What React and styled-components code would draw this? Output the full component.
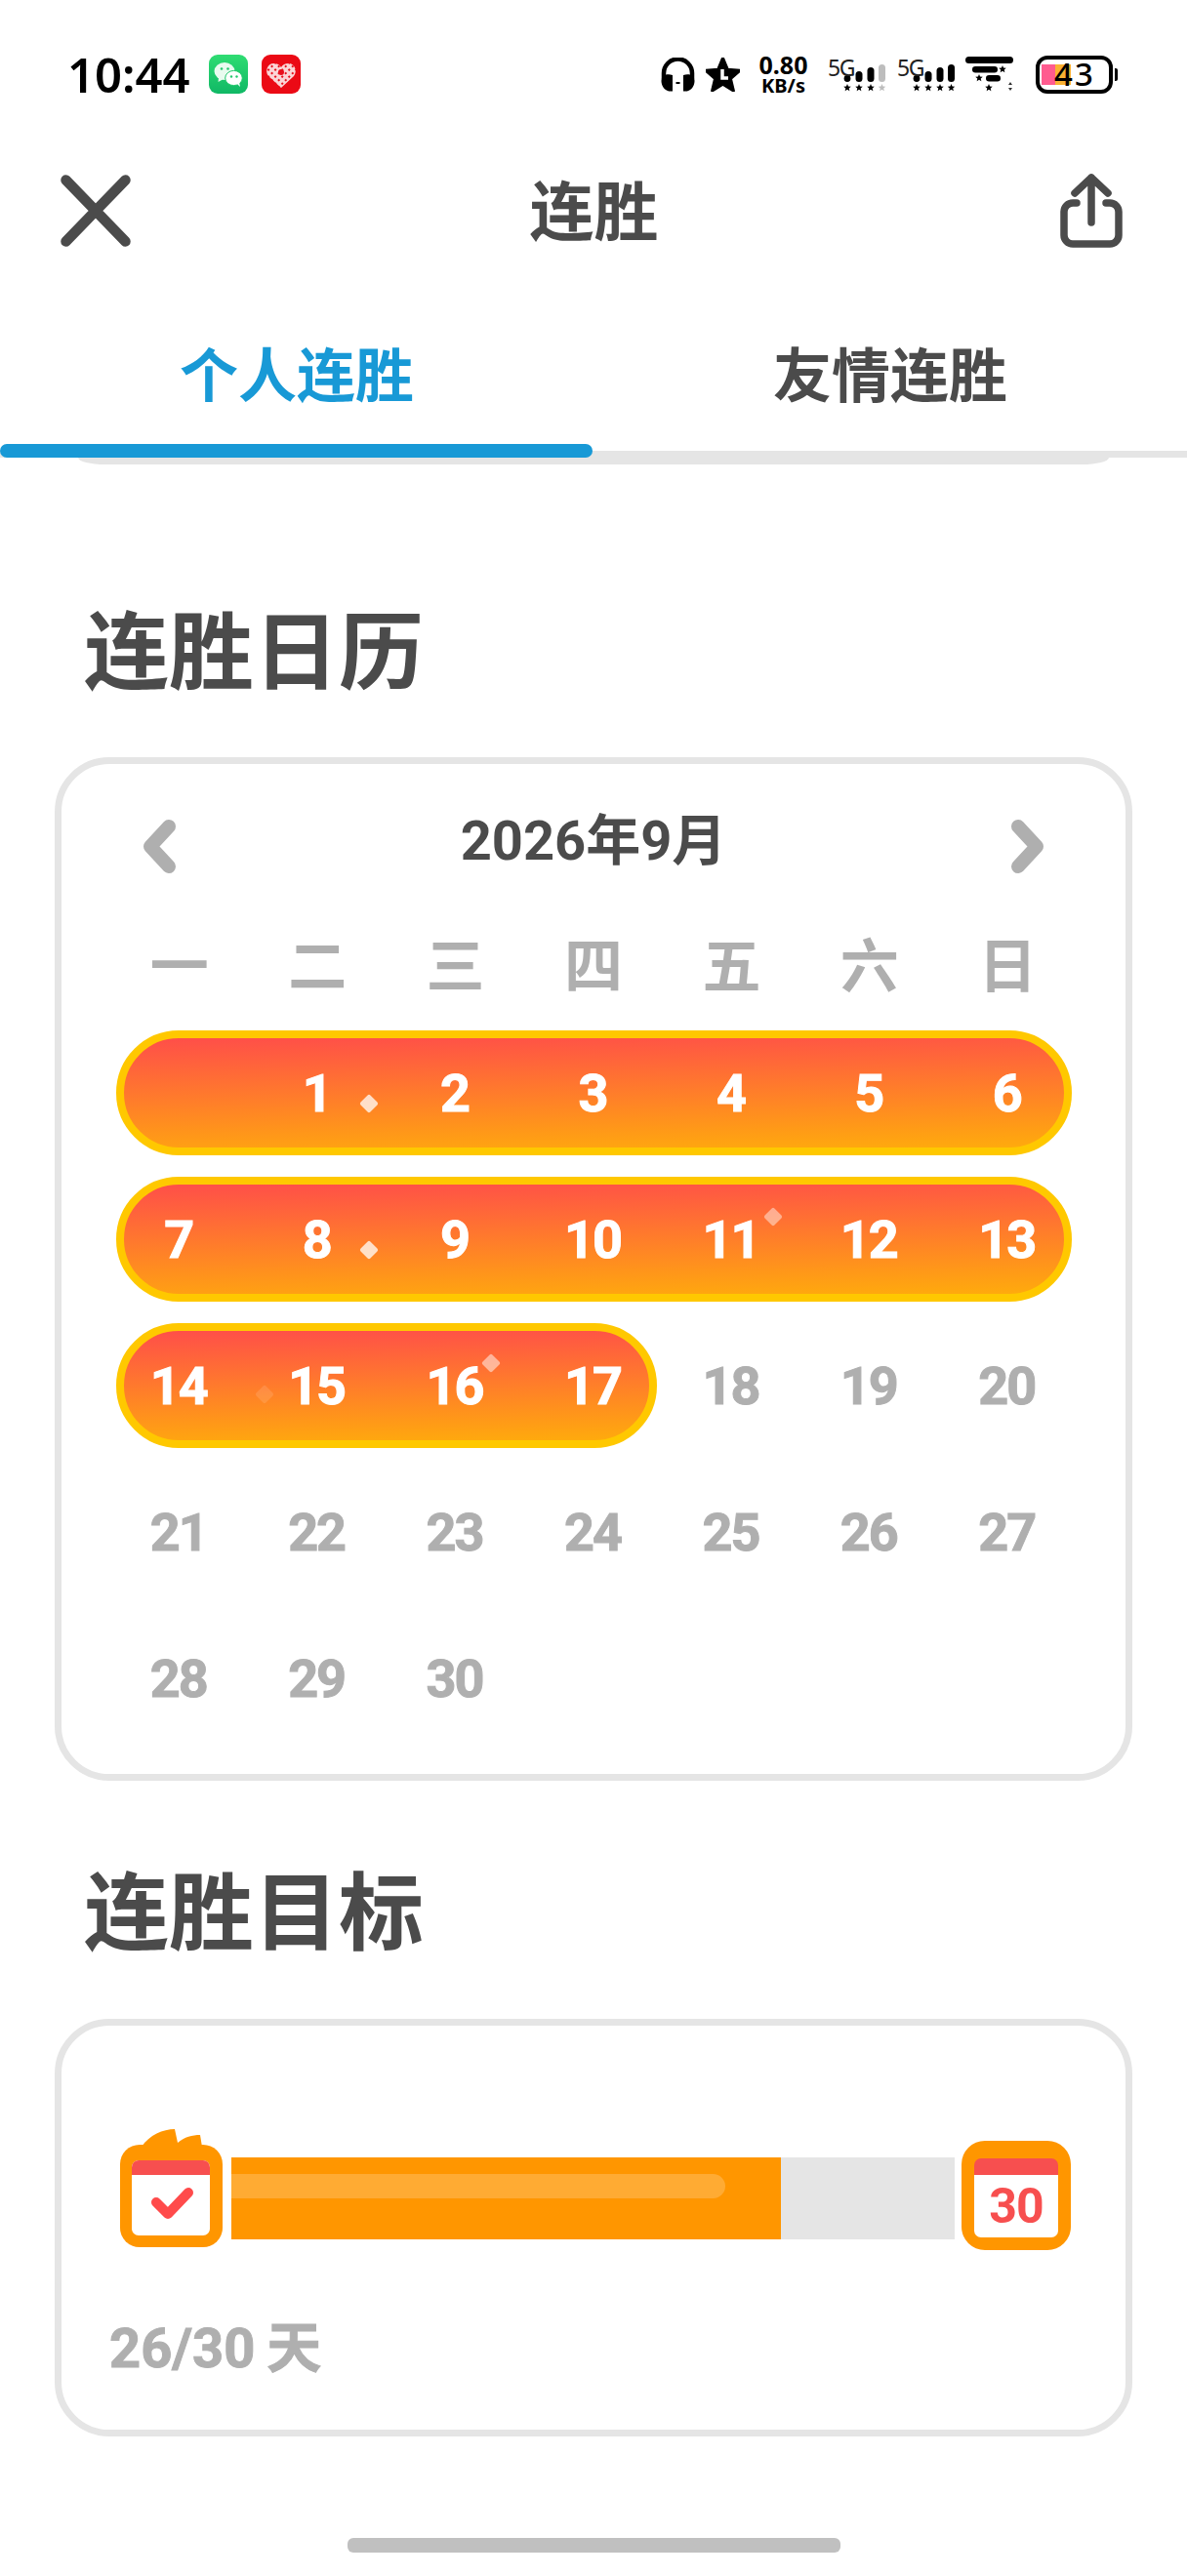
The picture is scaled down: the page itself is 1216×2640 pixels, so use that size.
import React from 'react'
import styled, { createGlobalStyle } from 'styled-components'

const GlobalStyle = createGlobalStyle`
  html, body {
    margin: 0;
    padding: 0;
    background: #fff;
  }
  body {
    font-family: "Noto Sans CJK SC", "Noto Sans", sans-serif;
  }
  * {
    box-sizing: border-box;
  }
`

const Page = styled.div`
  width: 1216px;
  height: 2640px;
  overflow: hidden;
  background: #fff;
`

/* status bar */
const StatusBar = styled.div`
  height: 152px;
  padding: 0 71px 0 69px;
  display: flex;
  align-items: center;
  justify-content: space-between;
`

const StatusLeft = styled.div`
  display: flex;
  align-items: center;
`

const Clock = styled.span`
  font-family: "Noto Sans", sans-serif;
  font-weight: 600;
  font-size: 49px;
  line-height: 1;
  color: #000;
  margin-right: 19px;
`

const AppIcon = styled.svg`
  width: 40px;
  height: 40px;
  display: block;
  margin-right: 14px;
`

const StatusRight = styled.div`
  display: flex;
  align-items: center;
`

const StatusItem = styled.div`
  margin-left: ${p => p.$gap || 0}px;
  display: flex;
`

const NetSpeed = styled.div`
  width: 53px;
  display: flex;
  flex-direction: column;
  align-items: center;
  font-family: "Noto Sans", sans-serif;
  font-weight: 700;
  color: #000;
  span:first-child {
    font-size: 25px;
    line-height: 24px;
  }
  span:last-child {
    font-size: 20px;
    line-height: 20px;
  }
`

const SignalWrap = styled.div`
  position: relative;
  width: 60px;
  height: 40px;
`

const SignalLabel = styled.span`
  position: absolute;
  left: 0;
  top: 1px;
  font-family: "Noto Sans", sans-serif;
  font-size: 23px;
  line-height: 24px;
  letter-spacing: -1.5px;
  color: #222;
`

const BatteryBody = styled.div`
  position: relative;
  width: 79px;
  height: 39px;
  border: 4px solid #000;
  border-radius: 12px;
  padding: 5px 2px;
  display: flex;
`

const BatterySegment = styled.div`
  width: ${p => p.$w}px;
  height: 100%;
  background: ${p => p.$color};
`

const BatteryText = styled.span`
  position: absolute;
  left: 15px;
  top: -1px;
  font-family: "Noto Sans", sans-serif;
  font-size: 33px;
  font-weight: 500;
  line-height: 32px;
  letter-spacing: 2px;
  color: #000;
`

const BatteryNub = styled.div`
  width: 3px;
  height: 13px;
  margin: 13px 0 0 2px;
  background: #000;
  border-radius: 0 2px 2px 0;
`

/* nav */
const NavBar = styled.div`
  height: 128px;
  padding: 0 66px 0 62px;
  display: flex;
  align-items: center;
  justify-content: space-between;
`

const NavTitle = styled.div`
  margin: 0 3px 8px 0;
  font-size: 66px;
  font-weight: 700;
  line-height: 80px;
  color: #4b4b4b;
`

const TabBar = styled.div`
  position: relative;
  height: 189px;
  padding-top: 19px;
  display: flex;
  border-bottom: 7px solid #e5e5e5;
`

const Tab = styled.div`
  flex: 1;
  display: flex;
  align-items: center;
  justify-content: center;
  font-size: 60px;
  font-weight: 700;
  color: ${p => (p.$active ? '#1899d6' : '#4b4b4b')};
`

const TabIndicator = styled.div`
  position: absolute;
  left: 0;
  bottom: -7px;
  width: 607px;
  height: 14px;
  border-radius: 7px;
  background: #1899d6;
`

const PeekCard = styled.div`
  height: 7px;
  margin: 0 80px;
  background: #e5e5e5;
  border-radius: 0 0 28px 28px / 0 0 7px 7px;
`

/* sections */
const SectionTitle = styled.h2`
  margin: ${p => p.$top}px 0 ${p => p.$bottom}px;
  padding-left: 86px;
  font-size: 87px;
  font-weight: 700;
  line-height: 100px;
  color: #4b4b4b;
`

const Card = styled.div`
  margin: 0 56px;
  border: 7px solid #e5e5e5;
  border-radius: 56px;
  background: #fff;
`

const CalendarCard = styled(Card)`
  height: 1049px;
  padding: 29px 50px 0;
`

const MonthHeader = styled.div`
  height: 100px;
  padding: 0 33px;
  display: flex;
  align-items: center;
  justify-content: space-between;
`

const MonthLabel = styled.div`
  font-family: Roboto, "Noto Sans CJK SC", sans-serif;
  font-size: 56px;
  font-weight: 700;
  line-height: 100px;
  color: #4b4b4b;
`

const Chevron = styled.svg`
  width: 35px;
  height: 57px;
  display: block;
  margin-top: 10px;
`

const WeekdayRow = styled.div`
  height: 80px;
  margin: 30px 0 23px;
  display: grid;
  grid-template-columns: repeat(7, 1fr);
`

const Weekday = styled.div`
  display: flex;
  align-items: center;
  justify-content: center;
  font-size: 60px;
  font-weight: 700;
  color: #afafaf;
`

const WeekRow = styled.div`
  position: relative;
  height: 150px;
  display: grid;
  grid-template-columns: repeat(7, 1fr);
  grid-template-rows: 150px;
`

const StreakPill = styled.div`
  grid-row: 1;
  grid-column: 1 / span ${p => p.$span};
  margin: 11px 5.5px;
  border: 8px solid #ffc800;
  border-radius: 64px;
  background: linear-gradient(179deg, #ff5048 2%, #ffab0c 100%);
`

const DayCell = styled.div`
  position: relative;
  grid-row: 1;
  grid-column: ${p => p.$col};
  display: flex;
  align-items: center;
  justify-content: center;
  padding-right: 2px;
  font-family: Roboto, sans-serif;
  font-size: 54px;
  font-weight: 700;
  letter-spacing: -2px;
  -webkit-text-stroke: 1px ${p => (p.$done ? '#fff' : '#afafaf')};
  color: ${p => (p.$done ? '#fff' : '#afafaf')};
`

const Sparkle = styled.i`
  position: absolute;
  width: 14px;
  height: 14px;
  border-radius: 2px;
  background: #fff;
  transform: translate(-50%, -50%) rotate(45deg);
  left: ${p => p.$x}px;
  top: ${p => p.$y}px;
  opacity: ${p => p.$o};
`

const GoalCard = styled(Card)`
  padding: 106px 56px 43px 49px;
`

const GoalRow = styled.div`
  margin-left: 11px;
  display: flex;
  align-items: flex-start;
`

const StartBadge = styled.svg`
  width: 105px;
  height: 121px;
  display: block;
  flex: none;
`

const GoalTrack = styled.div`
  flex: 1;
  height: 84px;
  margin: 29px 7px 0 9px;
  background: #e5e5e5;
`

const GoalFill = styled.div`
  height: 100%;
  padding-top: 17px;
  background: #ff9600;
`

const GoalShine = styled.div`
  height: 25px;
  border-radius: 0 13px 13px 0;
  background: rgba(255, 255, 255, 0.2);
`

const EndBadge = styled.div`
  width: 112px;
  height: 112px;
  margin-top: 12px;
  padding: 18px 13px 13px;
  flex: none;
  border-radius: 24px;
  background: #ff9600;
`

const EndPage = styled.div`
  height: 100%;
  overflow: hidden;
  border-radius: 7px;
  background: #fff;
  border-top: 17px solid #f74f4f;
  display: flex;
  align-items: center;
  justify-content: center;
  font-family: Roboto, sans-serif;
  font-size: 50px;
  font-weight: 700;
  letter-spacing: -1px;
  color: #f74f4f;
`

const GoalText = styled.div`
  margin-top: 61px;
  font-family: Roboto, "Noto Sans CJK SC", sans-serif;
  font-size: 56px;
  font-weight: 700;
  line-height: 80px;
  color: #afafaf;
  -webkit-text-stroke: 1px #afafaf;
  word-spacing: -2px;
`

const HomeBar = styled.div`
  width: 505px;
  height: 15px;
  margin: 104px auto 0;
  border-radius: 6px;
  background: #c0c0c0;
`

const starPoints = (cx, cy, r) => {
  const pts = []
  for (let i = 0; i < 10; i++) {
    const rad = i % 2 === 0 ? r : r * 0.45
    const a = (Math.PI / 5) * i - Math.PI / 2
    pts.push(`${(cx + rad * Math.cos(a)).toFixed(2)},${(cy + rad * Math.sin(a)).toFixed(2)}`)
  }
  return pts.join(' ')
}

const CloseIcon = () => (
  <svg width="72" height="74" viewBox="0 0 72 74" fill="none" stroke="#4b4b4b" strokeWidth="10.5" strokeLinecap="round">
    <path d="M5.5 5.5 L66.5 68.5 M66.5 5.5 L5.5 68.5" />
  </svg>
)

const ShareIcon = () => (
  <svg width="64" height="76" viewBox="0 0 64 76" fill="none" stroke="#4b4b4b" strokeWidth="7.5" strokeLinecap="round" strokeLinejoin="round">
    <path d="M32 50 V4 M15 20 L32 4 L49 20" />
    <path d="M17 30 H13 A9 9 0 0 0 4 39 V63 A9 9 0 0 0 13 72 H51 A9 9 0 0 0 60 63 V39 A9 9 0 0 0 51 30 H47" />
  </svg>
)

const WeChatIcon = () => (
  <AppIcon viewBox="0 0 40 40">
    <defs>
      <linearGradient id="wx" x1="0" y1="0" x2="0" y2="1">
        <stop offset="0" stopColor="#2fdc72" />
        <stop offset="1" stopColor="#10b865" />
      </linearGradient>
    </defs>
    <rect width="40" height="40" rx="9" fill="url(#wx)" />
    <ellipse cx="16" cy="17" rx="10.5" ry="9" fill="#e9fbef" />
    <path d="M10 23 L9.5 28 L15 25 Z" fill="#e9fbef" />
    <ellipse cx="25.5" cy="24" rx="8.8" ry="7.6" fill="#fff" stroke="#22c96c" strokeWidth="1" />
    <path d="M29 30 L32 33 L31 28 Z" fill="#fff" />
    <circle cx="13" cy="14.5" r="1.3" fill="#22c96c" />
    <circle cx="19.5" cy="14.5" r="1.3" fill="#22c96c" />
    <circle cx="23" cy="22.5" r="1.2" fill="#22c96c" />
    <circle cx="28.5" cy="22.5" r="1.2" fill="#22c96c" />
  </AppIcon>
)

const PddIcon = () => (
  <AppIcon viewBox="0 0 40 40">
    <defs>
      <pattern id="pdd" width="5" height="5" patternUnits="userSpaceOnUse" patternTransform="rotate(45)">
        <rect width="5" height="5" fill="#fbd5d6" />
        <rect x="0" y="0" width="2" height="2" fill="#e8101c" />
      </pattern>
    </defs>
    <rect width="40" height="40" rx="9" fill="#eb0a15" />
    <path d="M20 34 L7 22 C3 17 6 9 12.5 9 C16 9 18.5 10.5 20 13 C21.5 10.5 24 9 27.5 9 C34 9 37 17 33 22 Z" fill="url(#pdd)" />
    <circle cx="20" cy="18" r="3" fill="#e8101c" />
  </AppIcon>
)

const HeadphonesIcon = () => (
  <svg width="35" height="35" viewBox="0 0 35 35" style={{ display: 'block' }}>
    <path d="M3 22 V16 A14.5 14.5 0 0 1 32 16 V22" fill="none" stroke="#000" strokeWidth="4.5" />
    <path d="M0.5 24 C0.5 19 5 16 12 18 V34.5 C5 35.5 0.5 30 0.5 24 Z" fill="#000" />
    <path d="M34.5 24 C34.5 19 30 16 23 18 V34.5 C30 35.5 34.5 30 34.5 24 Z" fill="#000" />
    <rect x="15.5" y="25" width="4" height="2" fill="#000" />
  </svg>
)

const StarClockIcon = () => (
  <svg width="35" height="35" viewBox="0 0 35 35" style={{ display: 'block' }}>
    <polygon points={starPoints(17.5, 19, 18.5)} fill="#000" stroke="#000" strokeWidth="3" strokeLinejoin="round" />
    <path d="M17 12 V21 H23" fill="none" stroke="#fff" strokeWidth="3.5" />
  </svg>
)

const SignalIcon = ({ dim }) => (
  <SignalWrap>
    <SignalLabel>5G</SignalLabel>
    <svg width="60" height="40" viewBox="0 0 60 40" style={{ display: 'block' }}>
      <circle cx="20" cy="24.5" r="3.4" fill="#000" />
      <rect x="28.5" y="17" width="7" height="11" rx="3.5" fill="#000" />
      <rect x="40.5" y="13" width="7" height="15" rx="3.5" fill="#000" />
      <rect x="52" y="10" width="7" height="18" rx="3.5" fill={dim ? '#bdbdbd' : '#000'} />
      <polygon points={starPoints(20, 34, 4)} fill="#000" />
      <polygon points={starPoints(32, 34, 4)} fill="#000" />
      <polygon points={starPoints(44, 34, 4)} fill="#000" />
      <polygon points={starPoints(55.5, 34, 4)} fill={dim ? '#bdbdbd' : '#000'} />
    </svg>
  </SignalWrap>
)

const WifiIcon = () => (
  <svg width="50" height="40" viewBox="0 0 50 40" style={{ display: 'block' }}>
    <rect x="0" y="2" width="49" height="7" rx="3.5" fill="#000" />
    <rect x="7" y="12" width="26" height="6.5" rx="3.2" fill="#000" />
    <rect x="21" y="21" width="15" height="6.5" rx="3.2" fill="#000" />
    <polygon points={starPoints(38, 15, 4)} fill="#000" />
    <polygon points={starPoints(14, 24, 4)} fill="#000" />
    <polygon points={starPoints(24, 34, 4)} fill="#000" />
    <path d="M46 28 L48 31 H44 Z M46 37 L48 34 H44 Z" fill="#333" />
  </svg>
)

const ChevronIcon = ({ right }) => (
  <Chevron viewBox="0 0 35 57" fill="none" stroke="#afafaf" strokeWidth="14" strokeLinecap="round" strokeLinejoin="round">
    <path d={right ? 'M8 8 L27 28.5 L8 49' : 'M27 8 L8 28.5 L27 49'} />
  </Chevron>
)

const StartBadgeIcon = () => (
  <StartBadge viewBox="0 0 105 121">
    <path d="M22 18 C30 6 44 0 56 0 L59 14 C66 8 74 6 82 6 L84 18 Z" fill="#ff9600" />
    <rect x="0" y="16" width="105" height="105" rx="20" fill="#ff9600" />
    <rect x="12" y="32" width="80" height="77" rx="7" fill="#fff" />
    <path d="M12 47 V39 A7 7 0 0 1 19 32 H85 A7 7 0 0 1 92 39 V47 Z" fill="#f74f4f" />
    <path d="M37 75 L49 87 L70 65" fill="none" stroke="#ff4b4b" strokeWidth="10" strokeLinecap="round" strokeLinejoin="round" />
  </StartBadge>
)

const weekdays = ['一', '二', '三', '四', '五', '六', '日']

// each week: where the streak pill ends and which days sit in it
const weeks = [
  { pill: 7, startCol: 2, days: [1, 2, 3, 4, 5, 6], done: 6 },
  { pill: 7, startCol: 1, days: [7, 8, 9, 10, 11, 12, 13], done: 7 },
  { pill: 4, startCol: 1, days: [14, 15, 16, 17, 18, 19, 20], done: 4 },
  { pill: 0, startCol: 1, days: [21, 22, 23, 24, 25, 26, 27], done: 0 },
  { pill: 0, startCol: 1, days: [28, 29, 30], done: 0 },
]

const sparkles = {
  1: { x: 124, y: 86, o: 0.75 },
  8: { x: 124, y: 86, o: 0.75 },
  11: { x: 113, y: 52, o: 0.45 },
  15: { x: 17, y: 84, o: 0.12 },
  16: { x: 107, y: 52, o: 0.5 },
}

export default function App() {
  return (
    <Page>
      <GlobalStyle />
      <StatusBar>
        <StatusLeft>
          <Clock>10:44</Clock>
          <WeChatIcon />
          <PddIcon />
        </StatusLeft>
        <StatusRight>
          <HeadphonesIcon />
          <StatusItem $gap={11}><StarClockIcon /></StatusItem>
          <StatusItem $gap={18}>
            <NetSpeed>
              <span>0.80</span>
              <span>KB/s</span>
            </NetSpeed>
          </StatusItem>
          <StatusItem $gap={19}><SignalIcon dim /></StatusItem>
          <StatusItem $gap={11}><SignalIcon /></StatusItem>
          <StatusItem $gap={10}><WifiIcon /></StatusItem>
          <StatusItem $gap={22}>
            <BatteryBody>
              <BatterySegment $w={14} $color="#ff5b8f" />
              <BatterySegment $w={16} $color="#f9b233" />
              <BatteryText>43</BatteryText>
            </BatteryBody>
            <BatteryNub />
          </StatusItem>
        </StatusRight>
      </StatusBar>

      <NavBar>
        <CloseIcon />
        <NavTitle>连胜</NavTitle>
        <ShareIcon />
      </NavBar>

      <TabBar>
        <Tab $active>个人连胜</Tab>
        <Tab>友情连胜</Tab>
        <TabIndicator />
      </TabBar>
      <PeekCard />

      <SectionTitle $top={136} $bottom={64}>连胜日历</SectionTitle>
      <CalendarCard>
        <MonthHeader>
          <ChevronIcon />
          <MonthLabel>2026年9月</MonthLabel>
          <ChevronIcon right />
        </MonthHeader>
        <WeekdayRow>
          {weekdays.map(d => <Weekday key={d}>{d}</Weekday>)}
        </WeekdayRow>
        {weeks.map(week => (
          <WeekRow key={week.days[0]}>
            {week.pill > 0 && <StreakPill $span={week.pill} />}
            {week.days.map((day, i) => (
              <DayCell key={day} $col={week.startCol + i} $done={i < week.done}>
                {day}
                {sparkles[day] && <Sparkle $x={sparkles[day].x} $y={sparkles[day].y} $o={sparkles[day].o} />}
              </DayCell>
            ))}
          </WeekRow>
        ))}
      </CalendarCard>

      <SectionTitle $top={79} $bottom={65}>连胜目标</SectionTitle>
      <GoalCard>
        <GoalRow>
          <StartBadgeIcon />
          <GoalTrack>
            <GoalFill style={{ width: '76%' }}>
              <GoalShine style={{ width: '89.9%' }} />
            </GoalFill>
          </GoalTrack>
          <EndBadge>
            <EndPage>30</EndPage>
          </EndBadge>
        </GoalRow>
        <GoalText>26/30 天</GoalText>
      </GoalCard>

      <HomeBar />
    </Page>
  )
}
